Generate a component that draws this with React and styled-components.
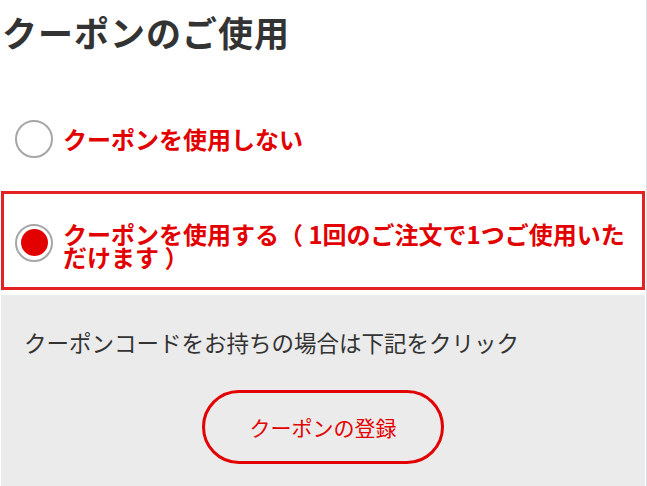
import React, { useState } from "react";
import styled, { createGlobalStyle } from "styled-components";

const GlobalStyle = createGlobalStyle`
  html, body {
    margin: 0;
    padding: 0;
    background: #ffffff;
  }
  body {
    font-family: "Noto Sans CJK JP", "Noto Sans", sans-serif;
    color: #333333;
  }
  * { box-sizing: border-box; }
`;

const Page = styled.div`
  width: 647px;
  min-height: 486px;
  padding: 0 1px 0 1px;
  border-right: 1px solid #dcdce4;
  display: flex;
  flex-direction: column;
`;

const Title = styled.h2`
  margin: 0;
  padding: 10px 0 0 1px;
  font-size: 35px;
  line-height: 44px;
  font-weight: 700;
  color: #333333;
  letter-spacing: 1px;
`;

const Options = styled.div`
  margin-top: 35px;
  display: flex;
  flex-direction: column;
  gap: 3px;
`;

const Option = styled.label`
  display: flex;
  align-items: center;
  gap: 10px;
  min-height: 99px;
  padding: ${(p) => (p.$multi ? "4px" : "0")} 6px 0 11px;
  border: 3px solid ${(p) => (p.$selected ? "#e52222" : "transparent")};
  cursor: pointer;
`;

const Radio = styled.span`
  flex: none;
  width: 38px;
  height: 38px;
  border-radius: 50%;
  border: 2px solid #a6a6a6;
  background: #ffffff;
  display: flex;
  align-items: center;
  justify-content: center;
  &::after {
    content: "";
    width: 27px;
    height: 27px;
    border-radius: 50%;
    background: #e20000;
    display: ${(p) => (p.$checked ? "block" : "none")};
  }
`;

const OptionText = styled.span`
  padding-top: ${(p) => (p.$multi ? "4px" : "0")};
  font-size: 24px;
  line-height: 23px;
  font-weight: 700;
  color: #e20000;
`;

const CodePanel = styled.div`
  margin-top: 5px;
  background: #ebebeb;
  flex: 1;
  padding: 30px 0 22px 0;
  display: flex;
  flex-direction: column;
  align-items: center;
`;

const CodeText = styled.p`
  align-self: flex-start;
  margin: 0;
  padding-left: 23px;
  font-size: 22.5px;
  line-height: 34px;
  font-weight: 400;
  color: #333333;
`;

const RegisterButton = styled.button`
  margin-top: 31px;
  width: 242px;
  height: 74px;
  border-radius: 37px;
  border: 3px solid #e20000;
  background: transparent;
  color: #e20000;
  font-family: "Noto Sans CJK JP", "Noto Sans", sans-serif;
  font-size: 21px;
  font-weight: 400;
  cursor: pointer;
`;

export default function App() {
  const [use, setUse] = useState(true);
  return (
    <>
      <GlobalStyle />
      <Page>
        <Title>クーポンのご使用</Title>
        <Options>
          <Option $selected={!use} onClick={() => setUse(false)}>
            <Radio $checked={!use} />
            <OptionText>クーポンを使用しない</OptionText>
          </Option>
          <Option $selected={use} $multi onClick={() => setUse(true)}>
            <Radio $checked={use} />
            <OptionText $multi>クーポンを使用する（ 1回のご注文で1つご使用いただけます ）</OptionText>
          </Option>
        </Options>
        <CodePanel>
          <CodeText>クーポンコードをお持ちの場合は下記をクリック</CodeText>
          <RegisterButton type="button">クーポンの登録</RegisterButton>
        </CodePanel>
      </Page>
    </>
  );
}
